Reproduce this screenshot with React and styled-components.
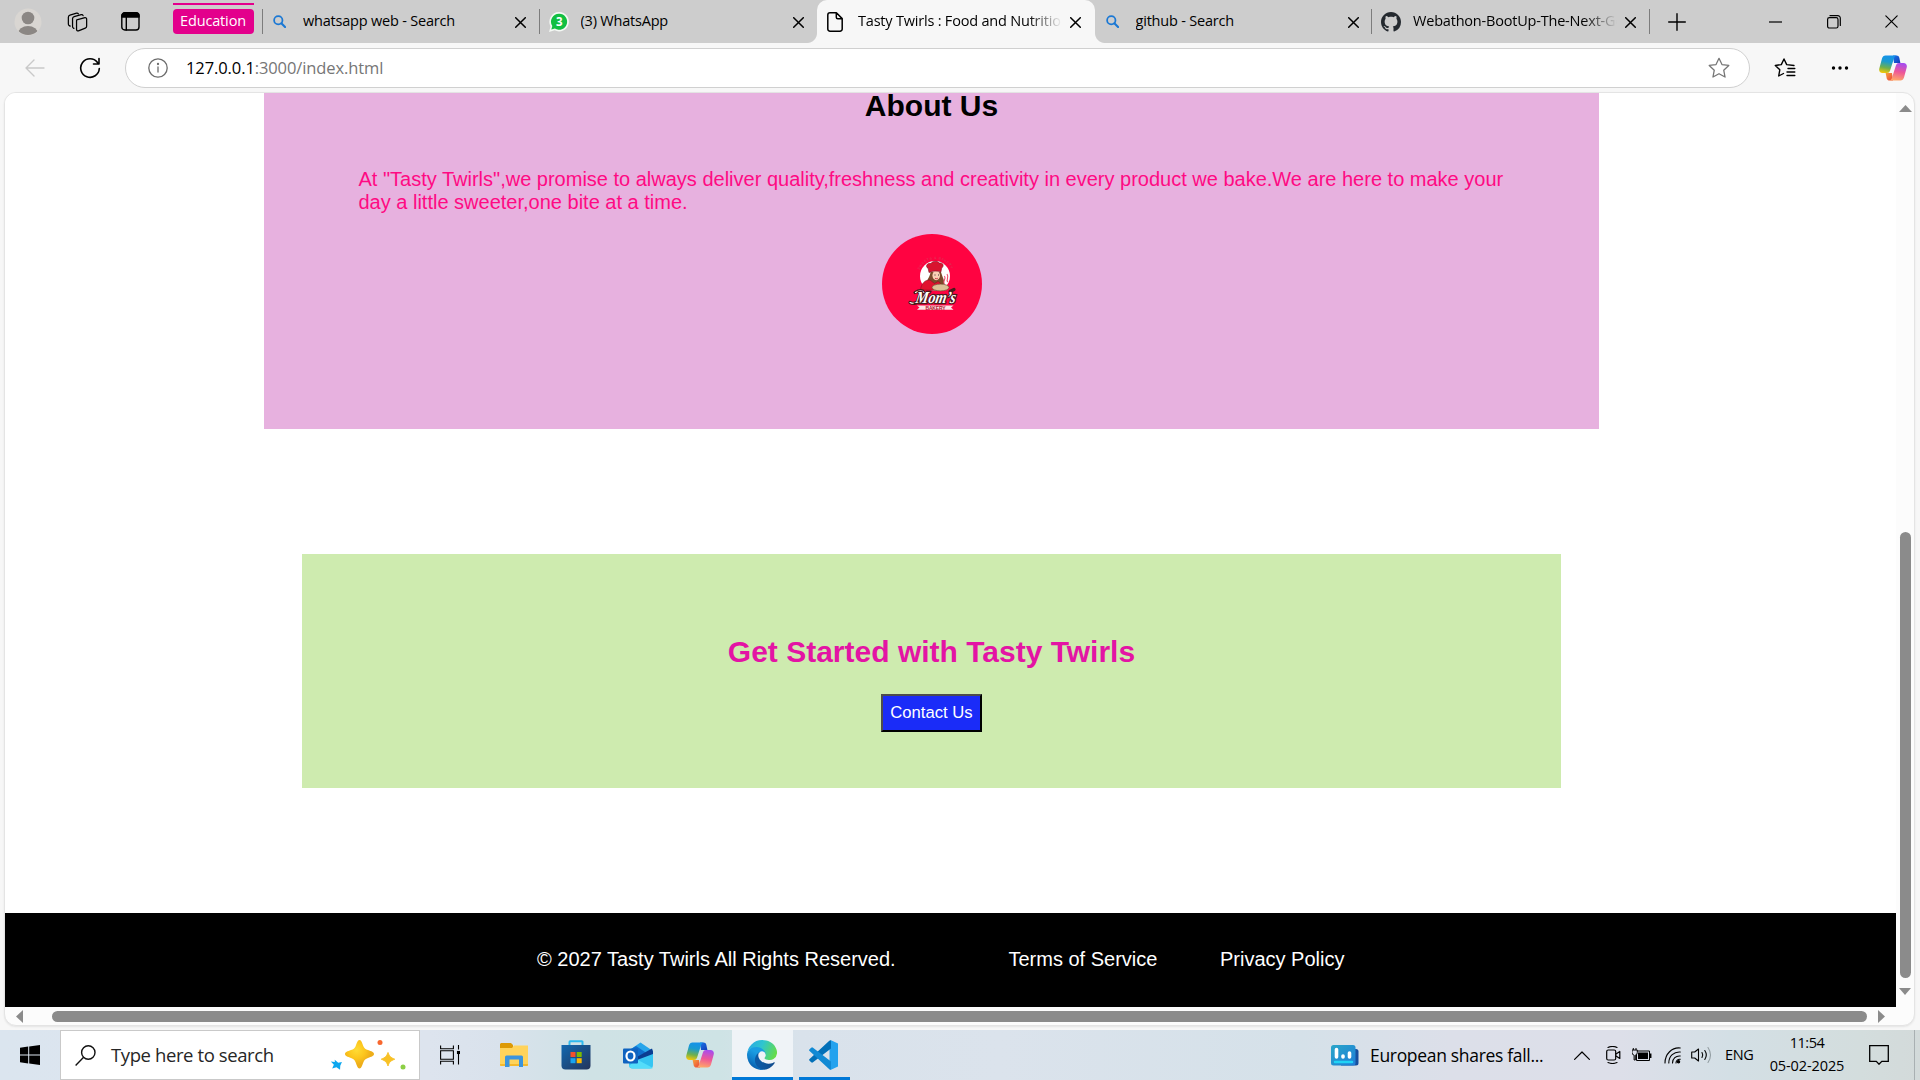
import React from "react";
import styled, { createGlobalStyle } from "styled-components";

const Global = createGlobalStyle`
  * { box-sizing: border-box; }
  body { margin: 0; background: #f7f7f7; overflow: hidden; }
  h2, p { margin: 0; font-weight: inherit; }
`;

const ui = `"Open Sans", "Noto Sans", sans-serif`;
const arial = `"Liberation Sans", Arial, sans-serif`;

const Screen = styled.div`
  width: 1920px;
  height: 1080px;
  display: flex;
  flex-direction: column;
  background: #f7f7f7;
  font-family: ${ui};
  color: #000;
  overflow: hidden;
`;

const Label = styled.span`
  font-size: ${(p) => p.$size}px;
  letter-spacing: ${(p) => p.$track || 0}px;
  color: ${(p) => p.$color || "#000"};
  white-space: nowrap;
  line-height: 1.3;
`;

/* ---------- tab strip ---------- */
const TabStrip = styled.header`
  height: 43px;
  flex: none;
  display: flex;
  background: #cdcdcd;
`;
const StripTools = styled.div`
  width: 173px;
  padding-left: 14px;
  display: flex;
  align-items: center;
`;
const ToolSlot = styled.div`
  width: ${(p) => p.$w}px;
  height: 100%;
  display: flex;
  align-items: center;
`;
const Group = styled.div`
  width: 81px;
  margin-right: 8px;
  padding-top: 3px;
`;
const GroupLine = styled.div`
  height: 2px;
  background: #e3008c;
`;
const GroupName = styled.div`
  margin-top: 4px;
  height: 25px;
  border-radius: 4px;
  background: #e3008c;
  display: flex;
  align-items: center;
  justify-content: center;
  padding: 0 1px 1px 0;
`;
const Tab = styled.div`
  position: relative;
  width: 277.5px;
  height: 43px;
  display: flex;
  align-items: center;
  padding: 0 11px 0 10px;
  border-radius: 10px 10px 0 0;
  background: ${(p) => (p.$active ? "#f7f7f7" : "transparent")};
  ${(p) =>
    p.$active &&
    `
    &::before, &::after {
      content: "";
      position: absolute;
      bottom: 0;
      width: 10px;
      height: 10px;
    }
    &::before { left: -10px; background: radial-gradient(circle at 0 0, #cdcdcd 9.5px, #f7f7f7 10.5px); }
    &::after { right: -10px; background: radial-gradient(circle at 100% 0, #cdcdcd 9.5px, #f7f7f7 10.5px); }
  `}
`;
const Divider = styled.i`
  width: 1px;
  height: 25px;
  margin: ${(p) => (p.$first ? "9px -1px 0 0" : "9px 0 0 -1px")};
  background: ${(p) => (p.$hide ? "transparent" : "#7c7c7c")};
`;
const TabIcon = styled.div`
  width: 31px;
  padding-left: ${(p) => p.$shift}px;
  display: flex;
  align-items: center;
`;
const TabTitle = styled.div`
  width: 204px;
  overflow: hidden;
  line-height: 1;
  ${(p) => p.$fade && `-webkit-mask-image: linear-gradient(90deg, #000 170px, transparent 204px);`}
`;
const TabClose = styled.div`
  margin-left: 8px;
  display: flex;
  padding-top: 1px;
`;
const WindowButtons = styled.div`
  flex: 1;
  display: flex;
  align-items: center;
  padding-left: 18px;
`;

/* ---------- toolbar ---------- */
const Toolbar = styled.div`
  height: 49px;
  flex: none;
  display: flex;
  align-items: center;
  padding: 1px 0 0 25px;
`;
const AddressBar = styled.div`
  width: 1625px;
  height: 40px;
  border: 1px solid #d0d0d0;
  border-radius: 20px;
  background: #fff;
  display: flex;
  align-items: center;
  padding: 0 19px 0 22px;
`;
const Url = styled.div`
  flex: 1;
  padding: 0 0 1px 18px;
`;

/* ---------- page ---------- */
const Viewport = styled.main`
  width: 1911px;
  height: 934px;
  margin-left: 4px;
  flex: none;
  display: grid;
  grid-template-columns: 1891px 18px;
  grid-template-rows: 914px 18px;
  border: 1px solid #e4e4e4;
  border-radius: 12px;
  background: #fcfcfc;
  overflow: hidden;
  box-shadow: 0 1px 2px rgba(0, 0, 0, 0.08);
`;
const Page = styled.div`
  background: #fff;
  overflow: hidden;
  display: flex;
  flex-direction: column;
  font-family: ${arial};
`;
const About = styled.section`
  width: 1335px;
  height: 340px;
  margin: -4px 0 0 259px;
  flex: none;
  background: #e7b1df;
  display: flex;
  flex-direction: column;
  align-items: center;
`;
const Heading = styled.h2`
  font-size: 30px;
  font-weight: 700;
  line-height: 34px;
  color: ${(p) => p.$color};
`;
const Promise = styled.p`
  width: 1146px;
  margin-top: 45px;
  font-size: 20px;
  line-height: 23px;
  color: #ff0a83;
`;
const Logo = styled.svg`
  margin-top: 20px;
`;
const Started = styled.section`
  width: 1259px;
  height: 234px;
  margin: 125px 0 0 297px;
  padding-top: 81px;
  flex: none;
  background: #ceebaf;
  display: flex;
  flex-direction: column;
  align-items: center;
`;
const Contact = styled.button`
  margin-top: 25px;
  width: 101px;
  height: 38px;
  padding: 0;
  border: 2px outset #000;
  border-color: #4d4d4d #000 #000 #4d4d4d;
  background: #1a2cf8;
  color: #fff;
  font: 16.67px ${arial};
`;
const Footer = styled.footer`
  height: 94px;
  margin-top: 125px;
  flex: none;
  background: #000;
  color: #fff;
  font-size: 20px;
  display: flex;
  align-items: center;
  padding: 0 0 2px 532px;
  white-space: nowrap;
`;
const FooterItem = styled.span`
  width: ${(p) => p.$w}px;
`;
const VBar = styled.div`
  display: flex;
  flex-direction: column;
  align-items: center;
  padding-top: 12px;
`;
const VThumb = styled.div`
  width: 11px;
  height: 446px;
  margin: 420px 0 10px;
  border-radius: 6px;
  background: #8b8b8b;
`;
const HBar = styled.div`
  display: flex;
  align-items: center;
  padding-left: 11px;
`;
const HThumb = styled.div`
  width: 1815px;
  height: 11px;
  margin: 0 11px 0 29px;
  border-radius: 6px;
  background: #8b8b8b;
`;

/* ---------- taskbar ---------- */
const Taskbar = styled.footer`
  height: 50px;
  margin-top: 4px;
  flex: none;
  display: flex;
  align-items: center;
  background: linear-gradient(90deg, #dbe5ef 0, #dde4ee 430px, #d9e2ec 500px, #cfe2e5 590px, #cee3e5 720px, #d9e2eb 800px, #dbe3ec 1000px, #d5e1e9 1300px, #dcdfe9 1450px, #dddfe9 1620px, #d3dfe5 1730px, #d3dddd 1860px, #d3dada 1920px);
`;
const SearchBox = styled.div`
  width: 360px;
  height: 50px;
  border: 1px solid #c9c9c9;
  background: #fff;
  display: flex;
  align-items: center;
  padding-left: 14px;
`;
const SearchText = styled.div`
  width: 234px;
  padding-left: 15px;
  line-height: 1;
`;
const Slot = styled.div`
  width: ${(p) => p.$w}px;
  height: 50px;
  flex: none;
  display: flex;
  align-items: center;
  justify-content: center;
  background: ${(p) => (p.$active ? "#eff3f7" : "transparent")};
  border-bottom: ${(p) => (p.$open ? "3px solid #0078d7" : "0")};
  padding: ${(p) => (p.$open ? "3px 1px 0 0" : 0)};
`;
const Tray = styled.div`
  margin-left: auto;
  display: flex;
  align-items: center;
`;
const Cell = styled.div`
  width: ${(p) => p.$w}px;
  flex: none;
  display: flex;
  align-items: center;
`;
const Clock = styled.div`
  width: 76px;
  display: flex;
  flex-direction: column;
  align-items: center;
  gap: 4px;
`;
const Edge = styled.i`
  width: 1px;
  height: 50px;
  margin-right: 5px;
  background: #a9b0b2;
`;

/* ---------- icons ---------- */
const line = { fill: "none", stroke: "#000", strokeWidth: 1.4, strokeLinecap: "round", strokeLinejoin: "round" };

const CloseIcon = ({ s = 11, w = 1.5 }) => (
  <svg width={s} height={s} viewBox="0 0 11 11" {...line} strokeWidth={w}>
    <path d="M.7.7l9.6 9.6M10.3.7L.7 10.3" />
  </svg>
);
const BingIcon = () => (
  <svg width="13" height="13" viewBox="0 0 14 14" fill="none" stroke="#1b78d4" strokeWidth="1.9">
    <circle cx="5.7" cy="5.7" r="4.5" />
    <path d="M9 9l4 4" strokeWidth="2.3" strokeLinecap="round" />
  </svg>
);
const WhatsIcon = () => (
  <svg width="20" height="20" viewBox="0 0 20 20">
    <path d="M10.3 0a9.7 9.7 0 1 1-4.6 18.3L0 20l1.6-5.6A9.7 9.7 0 0 1 10.3 0z" fill="#f4f8f4" />
    <path d="M10.3 1.7a8 8 0 1 1-4.4 14.8l-3.6 1 1-3.5a8 8 0 0 1 7-12.3z" fill="#12bf42" />
    <text x="10.2" y="14" fontSize="11.5" fontWeight="700" textAnchor="middle" fill="#fff" fontFamily="Open Sans">3</text>
  </svg>
);
const FileIcon = () => (
  <svg width="16" height="20" viewBox="0 0 16 20" {...line} strokeWidth="1.5">
    <path d="M3 .8h6.4L15.2 6.6V17a2.2 2.2 0 0 1-2.2 2.2H3A2.2 2.2 0 0 1 .8 17V3A2.2 2.2 0 0 1 3 .8zM9.3 1v4.2c0 .9.6 1.5 1.5 1.5H15" />
  </svg>
);
const GithubIcon = () => (
  <svg width="20" height="20" viewBox="0 0 16 16" fill="#24292f">
    <path d="M8 0C3.58 0 0 3.58 0 8c0 3.54 2.29 6.53 5.47 7.59.4.07.55-.17.55-.38 0-.19-.01-.82-.01-1.49-2.01.37-2.53-.49-2.69-.94-.09-.23-.48-.94-.82-1.13-.28-.15-.68-.52-.01-.53.63-.01 1.08.58 1.23.82.72 1.21 1.87.87 2.33.66.07-.52.28-.87.51-1.07-1.78-.2-3.64-.89-3.64-3.95 0-.87.31-1.59.82-2.15-.08-.2-.36-1.02.08-2.12 0 0 .67-.21 2.2.82.64-.18 1.32-.27 2-.27s1.36.09 2 .27c1.53-1.04 2.2-.82 2.2-.82.44 1.1.16 1.92.08 2.12.51.56.82 1.27.82 2.15 0 3.07-1.87 3.75-3.65 3.95.29.25.54.73.54 1.48 0 1.07-.01 1.93-.01 2.2 0 .21.15.46.55.38A8.01 8.01 0 0 0 16 8c0-4.42-3.58-8-8-8z" />
  </svg>
);
const Avatar = () => (
  <svg width="28" height="28" viewBox="0 0 28 28">
    <defs><clipPath id="av"><circle cx="14" cy="14" r="13" /></clipPath></defs>
    <circle cx="14" cy="14" r="13.5" fill="#d9d6d2" />
    <g clipPath="url(#av)" fill="#8b8784"><circle cx="14" cy="10" r="6.3" /><ellipse cx="14" cy="25.5" rx="10" ry="7.5" /></g>
  </svg>
);
const WorkspacesIcon = () => (
  <svg width="21" height="20" viewBox="0 0 22 21" {...line} strokeWidth="1.3">
    <path d="M10.2 8.200l8.600-2.300a1.500 1.500 0 0 1 1.800 1.500v7.600a2 2 0 0 1-1.400 1.900L12 19.800a1.500 1.500 0 0 1-2-1.400V9z" />
    <path d="M7.200 17.200l-.500-.300a2 2 0 0 1-.9-1.700V7A2.500 2.500 0 0 1 7.500 4.800l7.400-2a1.700 1.700 0 0 1 2 1M3.300 14.800l-.9-.500A2 2 0 0 1 1.400 12.500V5.500A2.500 2.500 0 0 1 3.100 3.200L10 1.200a1.700 1.700 0 0 1 1.900.7" />
  </svg>
);
const TabActionsIcon = () => (
  <svg width="19" height="19" viewBox="0 0 19 19" {...line}>
    <rect x=".8" y=".8" width="17.2" height="17.2" rx="3" />
    <path d="M1 5V3.500A2.500 2.500 0 0 1 3.500 1h12A2.500 2.500 0 0 1 18 3.500V5z" fill="#000" />
    <path d="M5.300 5v13" />
  </svg>
);
const star = "M10 1.200l2.700 5.700 6.200.8-4.600 4.300 1.200 6.200L10 15.200l-5.500 3 1.200-6.200L1.100 7.700l6.200-.8z";
const CopilotIcon = ({ id, w = 28 }) => (
  <svg width={w} height={w * 0.93} viewBox="0 0 28 26">
    <defs>
      <linearGradient id={id + "a"} x1=".5" y1="0" x2=".3" y2="1"><stop offset="0" stopColor="#1592ea" /><stop offset=".35" stopColor="#1a9bd0" /><stop offset=".7" stopColor="#6fb04d" /><stop offset="1" stopColor="#f4c808" /></linearGradient>
      <linearGradient id={id + "b"} x1=".6" y1="0" x2=".4" y2="1"><stop offset="0" stopColor="#a64cf0" /><stop offset=".5" stopColor="#ee5798" /><stop offset="1" stopColor="#ffa868" /></linearGradient>
      <linearGradient id={id + "c"} x1="0" y1="0" x2="1" y2="1"><stop offset="0" stopColor="#1a74e8" /><stop offset="1" stopColor="#123cb8" /></linearGradient>
      <linearGradient id={id + "d"} x1="0" y1="0" x2="1" y2="1"><stop offset="0" stopColor="#f9a13a" /><stop offset="1" stopColor="#e8423c" /></linearGradient>
    </defs>
    <path d="M14 .5h3.500c1.500 0 2.400.9 2.800 2.300L21.400 8H15z" fill={`url(#${id}c)`} />
    <path d="M14 25.500h-3.500c-1.500 0-2.400-.9-2.800-2.300L6.600 18H13z" fill={`url(#${id}d)`} />
    <path d="M6.500.5H18c-1.600 0-2.400 1-2.900 2.500l-4 12.500c-.6 1.700-1.500 2.500-3.200 2.500H3.500C.8 18-.3 16 .3 13.500L3 3.500C3.600 1.500 4.700.5 6.500.5z" fill={`url(#${id}a)`} />
    <path d="M21.500 25.500H10c1.600 0 2.400-1 2.900-2.500l4-12.500C17.500 8.800 18.400 8 20.100 8h4.400c2.700 0 3.800 2 3.200 4.500L25 22.500c-.6 2-1.700 3-3.500 3z" fill={`url(#${id}b)`} />
  </svg>
);
const Triangle = ({ w, h, d }) => (
  <svg width={w} height={h} viewBox={`0 0 ${w} ${h}`}><path d={d} fill="#8b8b8b" /></svg>
);
const BakeryLogo = () => (
  <Logo width="100" height="100" viewBox="0 0 100 100">
    <defs><path id="arc" d="M37.500 36a17.500 17.500 0 0 1 32.500 0" /></defs>
    <circle cx="50" cy="50" r="50" fill="#ff0341" />
    <text fontSize="3.400" fill="#d9405c" fontFamily="Liberation Sans"><textPath href="#arc" textLength="40">SWEETS &amp; BAKERY</textPath></text>
    <circle cx="53" cy="42" r="15" fill="#fff" />
    <path d="M48.500 38c-.5 5-3.500 7-4 12l6 1 8-1 3 1c2-4-1-7-2.500-13z" fill="#7a4a2a" />
    <ellipse cx="54.200" cy="41.500" rx="3.800" ry="4.700" fill="#fbd0b4" />
    <path d="M47 38.500l-.8-4c-3.500-2-.8-6 2.600-5 2-2.800 7-3 8.500-.4 3.500-1 5.300 2.600 2.400 5l-.8 3.900c-4-1.500-8-1.200-11.900.5z" fill="#d8142f" stroke="#7b1020" strokeWidth=".6" />
    <path d="M38.500 56c.5-6 4.500-10.500 9.500-10l4.500 3.500 3.500-2c3 1 4 4 4 9z" fill="#e0122f" stroke="#8b1020" strokeWidth=".6" />
    <path d="M52.500 41h1M56 41h1" stroke="#222" strokeWidth=".9" />
    <path d="M53 44.300q1.500.8 2.800 0" stroke="#c1122c" strokeWidth=".8" fill="none" />
    <path d="M62.500 50c-3-3 2.500-4 0-8M66 48c-3-3 2-3.500-1-8" stroke="#f04a68" strokeWidth="1.100" fill="none" />
    <ellipse cx="58.500" cy="53.500" rx="8.500" ry="3.400" fill="#dcc096" stroke="#765033" strokeWidth=".7" />
    <path d="M28 68.500c4 2 8 0 9.500-3M33 58.500c5-3 8-2 9 0M68 57.500l4-2" stroke="#4a1a1c" strokeWidth="3.200" fill="none" strokeLinecap="round" />
    <path d="M28 68.500c4 2 8 0 9.500-3M33.500 58.500c5-3 7-2 8.500 0" stroke="#fff" strokeWidth="1.100" fill="none" strokeLinecap="round" />
    <text transform="translate(33 69.300) skewX(-10)" fontFamily="Liberation Serif, serif" fontSize="17" fontStyle="italic" fontWeight="700" textLength="40" lengthAdjust="spacingAndGlyphs" fill="#fff" stroke="#4a1a1c" strokeWidth="2.400" paintOrder="stroke">Mom’s</text>
    <path d="M35 71.500h36.500l-2.500 2 2.500 2.300H35l2.500-2.300z" fill="#fbe4e6" />
    <text x="43.500" y="75.600" fontFamily="Liberation Sans" fontSize="5" fontWeight="700" textLength="20" fill="#b3122c">BAKERY</text>
  </Logo>
);
const Sparkles = () => (
  <svg width="76" height="32" viewBox="0 0 76 32">
    <defs>
      <radialGradient id="sp" cx=".4" cy=".35"><stop offset="0" stopColor="#ffdc35" /><stop offset=".6" stopColor="#fcc51d" /><stop offset="1" stopColor="#eeae1a" /></radialGradient>
    </defs>
    <path d="M29.500 1c2 0 2.600 3 4 6.500 1 2.200 2 2.600 4.500 3.600C41.500 12.500 44 13 44 15s-2.500 2.600-6 4c-2.500 1-3.500 1.500-4.500 4-1.400 3.500-2 6.500-4 6.500s-2.600-3-4-6.500c-1-2.500-2-3-4.500-4-3.500-1.400-6-2-6-4s2.500-2.500 6-3.900c2.500-1 3.500-1.400 4.500-3.600 1.400-3.500 2-6.500 4-6.500z" fill="url(#sp)" />
    <path d="M58 13.500c1.400 3.800 2.300 5 6.700 6.700-4.400 1.700-5.300 2.900-6.700 6.700-1.400-3.800-2.300-5-6.700-6.700 4.400-1.700 5.300-2.900 6.700-6.700z" fill="#f8c125" stroke="#f8c125" strokeLinejoin="round" />
    <path d="M4 21l4 2.500 3.500-1.500-1 4 .5 4-4-2-4 2 1-4-3.500-2.500 4-.2z" transform="rotate(10 6 25)" fill="#0ca7ef" />
    <circle cx="50" cy="3.500" r="2.500" fill="#f8672e" />
    <circle cx="73" cy="28" r="2.500" fill="#8ccf45" />
  </svg>
);
const EdgeIcon = () => (
  <svg width="30" height="30" viewBox="0 0 256 256">
    <defs>
      <linearGradient id="e1" x1=".25" y1=".8" x2="1" y2=".8"><stop offset="0" stopColor="#0c59a4" /><stop offset="1" stopColor="#114a8b" /></linearGradient>
      <linearGradient id="e2" x1=".6" y1=".35" x2=".3" y2=".95"><stop offset="0" stopColor="#1b9de2" /><stop offset=".5" stopColor="#1080cc" /><stop offset="1" stopColor="#0659a8" /></linearGradient>
      <linearGradient id="e3" x1="0" y1=".3" x2="1" y2=".6"><stop offset="0" stopColor="#2aa9e4" /><stop offset=".45" stopColor="#2fc5cf" /><stop offset="1" stopColor="#66dd45" /></linearGradient>
    </defs>
    <path d="M231 190.500a93.700 93.700 0 0 1-10.500 4.700 101.900 101.900 0 0 1-35.900 6.500c-47.300 0-88.500-32.500-88.500-74.300a31.500 31.500 0 0 1 16.400-27.300c-42.800 1.800-53.800 46.400-53.800 72.500 0 73.900 68.100 81.400 82.800 81.400 7.900 0 19.800-2.300 27-4.600l1.300-.4a128.300 128.300 0 0 0 66.600-52.800 4 4 0 0 0-5.400-5.700z" fill="url(#e1)" />
    <path d="M105.700 241.400a79.200 79.200 0 0 1-22.700-21.300 80.700 80.700 0 0 1 29.500-120c3.200-1.500 8.500-4.100 15.600-4a32.400 32.400 0 0 1 25.700 13 31.900 31.900 0 0 1 6.300 18.700c0-.2 24.500-79.600-80-79.600-43.900 0-80 41.700-80 78.200a130.200 130.200 0 0 0 12.100 56 128 128 0 0 0 156.400 67 75.500 75.500 0 0 1-62.800-8z" fill="url(#e2)" />
    <path d="M152.300 148.900c-.8 1-3.300 2.500-3.300 5.700 0 2.600 1.700 5.200 4.800 7.300 14.400 10.100 41.700 8.700 41.800 8.700a59.600 59.600 0 0 0 30.300-8.300 61.400 61.400 0 0 0 30.400-52.900c.3-22.400-8-37.300-11.300-43.900C223.700 24 178.100 1 128 1A128 128 0 0 0 0 126.200c.5-36.500 36.800-66 80-66 3.500 0 23.500.3 42 10.100a72.600 72.600 0 0 1 30.900 29.300c6.100 10.600 7.200 24.100 7.200 29.500s-2.700 13.300-7.800 19.800z" fill="url(#e3)" />
  </svg>
);

const tabs = [
  { icon: <BingIcon />, shift: 1, title: "whatsapp web - Search", line: true },
  { icon: <WhatsIcon />, shift: -1, title: "(3) WhatsApp", line: false },
  { icon: <FileIcon />, shift: 0, title: "Tasty Twirls : Food and Nutrition", active: true, fade: true },
  { icon: <BingIcon />, shift: 1, title: "github - Search", line: true },
  { icon: <GithubIcon />, shift: -1, title: "Webathon-BootUp-The-Next-Gen", line: true, fade: true },
];

const IconNudge = styled.div`
  display: flex;
  margin-left: ${(p) => p.$x}px;
`;

export default function App() {
  return (
    <Screen>
      <Global />
      <TabStrip>
        <StripTools>
          <ToolSlot $w={53}><Avatar /></ToolSlot>
          <ToolSlot $w={54}><WorkspacesIcon /></ToolSlot>
          <ToolSlot $w={30}><TabActionsIcon /></ToolSlot>
        </StripTools>
        <Group>
          <GroupLine />
          <GroupName><Label $size={14.5} $track={-0.15} $color="#fff">Education</Label></GroupName>
        </Group>
        <Divider $first />
        {tabs.map((t) => (
          <React.Fragment key={t.title}>
            <Tab $active={t.active}>
              <TabIcon $shift={0}><IconNudge $x={t.shift}>{t.icon}</IconNudge></TabIcon>
              <TabTitle $fade={t.fade}><Label $size={14.5} $track={-0.2}>{t.title}</Label></TabTitle>
              <TabClose><CloseIcon /></TabClose>
            </Tab>
            <Divider $hide={!t.line} />
          </React.Fragment>
        ))}
        <WindowButtons>
          <ToolSlot $w={101}>
            <svg width="18" height="18" viewBox="0 0 18 18" {...line}><path d="M9 .7v16.600M.7 9h16.600" /></svg>
          </ToolSlot>
          <ToolSlot $w={58}>
            <svg width="13" height="2" viewBox="0 0 13 2"><path d="M0 1h13" stroke="#000" strokeWidth="1.200" /></svg>
          </ToolSlot>
          <ToolSlot $w={58}>
            <svg width="14" height="14" viewBox="0 0 14 14" {...line} strokeWidth="1.200">
              <rect x=".6" y="2.600" width="10.400" height="10.400" rx="1.800" />
              <path d="M3 .7h7.800A2.500 2.500 0 0 1 13.300 3.200V10.500" />
            </svg>
          </ToolSlot>
          <CloseIcon s={13} w={1} />
        </WindowButtons>
      </TabStrip>

      <Toolbar>
        <ToolSlot $w={54}>
          <svg width="20" height="18" viewBox="0 0 20 18" {...line} stroke="#c9c9c9"><path d="M19 9H1M9 1L1 9l8 8" /></svg>
        </ToolSlot>
        <ToolSlot $w={46}>
          <svg width="22" height="22" viewBox="0 0 22 22" {...line} strokeWidth="1.600">
            <path d="M20.300 11.500A9.300 9.300 0 1 1 18.500 5.500L19.800 7M20 1.500V7h-5.500" />
          </svg>
        </ToolSlot>
        <AddressBar>
          <svg width="20" height="20" viewBox="0 0 20 20" {...line} stroke="#6c6c6c" strokeWidth="1.300">
            <circle cx="10" cy="10" r="9.200" /><path d="M10 9v5" /><circle cx="10" cy="6" r=".5" fill="#6c6c6c" />
          </svg>
          <Url>
            <Label $size={16.5} $track={-0.1}>127.0.0.1</Label>
            <Label $size={16.5} $track={-0.1} $color="#767676">:3000/index.html</Label>
          </Url>
          <svg width="22" height="22" viewBox="0 0 20 20" {...line} stroke="#757575" strokeWidth="1.150"><path d={star} /></svg>
        </AddressBar>
        <ToolSlot $w={81}>
          <svg width="46" height="22" viewBox="-24 0 46 22" {...line}>
            <path d="M9.500 17.500L4.700 20l1.100-6.200L1.300 9.500l6-.9L10 3l2.700 5.600 7.300.9M14 12.500h6.800M13 16h7.800M13 19.500h7.800" transform="translate(0 -1)" />
          </svg>
        </ToolSlot>
        <ToolSlot $w={48}>
          <svg width="18" height="4" viewBox="0 0 18 4"><circle cx="2.500" cy="2" r="1.700" /><circle cx="9" cy="2" r="1.700" /><circle cx="15.500" cy="2" r="1.700" /></svg>
        </ToolSlot>
        <CopilotIcon id="top" />
      </Toolbar>

      <Viewport>
        <Page>
          <About>
            <Heading $color="#000">About Us</Heading>
            <Promise>
              At "Tasty Twirls",we promise to always deliver quality,freshness and creativity in every product we bake.We are here to make your day a little sweeter,one bite at a time.
            </Promise>
            <BakeryLogo />
          </About>
          <Started>
            <Heading $color="#e314a4">Get Started with Tasty Twirls</Heading>
            <Contact>Contact Us</Contact>
          </Started>
          <Footer>
            <FooterItem $w={471.5}>© 2027 Tasty Twirls All Rights Reserved.</FooterItem>
            <FooterItem $w={211.5}>Terms of Service</FooterItem>
            <FooterItem $w={130}>Privacy Policy</FooterItem>
          </Footer>
        </Page>
        <VBar>
          <Triangle w={13} h={7} d="M6.500 0L13 7H0z" />
          <VThumb />
          <Triangle w={12} h={7} d="M0 0h12L6 7z" />
        </VBar>
        <HBar>
          <Triangle w={7} h={13} d="M7 0v13L0 6.500z" />
          <HThumb />
          <Triangle w={7} h={13} d="M0 0v13l7-6.500z" />
        </HBar>
      </Viewport>

      <Taskbar>
        <Slot $w={60}>
          <svg width="20" height="20" viewBox="0 0 20 20"><path d="M0 2.800L8.200 1.600V9.500H0zM9.200 1.500L20 0v9.500H9.200zM0 10.400h8.200v8L0 17.200zM9.200 10.400H20V20L9.200 18.500z" /></svg>
        </Slot>
        <SearchBox>
          <svg width="21" height="21" viewBox="0 0 21 21" fill="none" stroke="#111" strokeWidth="1.400"><circle cx="13.300" cy="7.500" r="6.700" /><path d="M8.600 12.300L.6 20.400" /></svg>
          <SearchText><Label $size={18.5} $track={-0.4} $color="#262626">Type here to search</Label></SearchText>
          <Sparkles />
        </SearchBox>
        <Slot $w={60}>
          <svg width="20" height="20" viewBox="0 0 20 20" fill="none" stroke="#000" strokeWidth="1.100">
            <path d="M.6.5v3.200h12.800V.5M.6 19.500v-3.200h12.800v3.200M.6 5.800h12.800v8.500H.6zM18.500 0v4.500M18.500 9v10.500" /><rect x="17.500" y="6.500" width="2" height="2" fill="#000" />
          </svg>
        </Slot>
        <Slot $w={67}>
          <svg width="28" height="24" viewBox="0 0 28 24">
            <path d="M1 0h10l2 2v4H0V1z" fill="#dd9a06" /><path d="M0 5h12l2-2.500h14V22a1 1 0 0 1-1 1H1a1 1 0 0 1-1-1z" fill="#ffd35b" /><path d="M0 21h28v1a1 1 0 0 1-1 1H1a1 1 0 0 1-1-1z" fill="#f5b92c" />
            <path d="M5 24V14a1.500 1.500 0 0 1 1.500-1.500h15A1.500 1.500 0 0 1 23 14v10h-4v-7.500H9.500V24z" fill="#3b94dd" />
          </svg>
        </Slot>
        <Slot $w={57}>
          <svg width="30" height="30" viewBox="0 0 30 30">
            <defs><linearGradient id="st" x1="0" y1="0" x2="1" y2="1"><stop offset="0" stopColor="#1268b0" /><stop offset="1" stopColor="#24345a" /></linearGradient></defs>
            <path d="M8.500 7V2a.7.700 0 0 1 .7-.7h11.600a.7.700 0 0 1 .7.7v5" fill="none" stroke="#2fb9ee" strokeWidth="2" />
            <path d="M.5 5h29v20.500a4 4 0 0 1-4 4h-21a4 4 0 0 1-4-4z" fill="url(#st)" />
            <path d="M9.500 12h5v5h-5z" fill="#f2502c" /><path d="M15.700 12h5v5h-5z" fill="#7fba00" /><path d="M9.500 18.200h5v5h-5z" fill="#19a4ef" /><path d="M15.700 18.200h5v5h-5z" fill="#ffb900" />
          </svg>
        </Slot>
        <Slot $w={68}>
          <svg width="31" height="27" viewBox="0 0 31 27">
            <path d="M5 9L17.500.5 30 9v6H5z" fill="#27a5ea" /><path d="M5 9l8-5 12 8-10 6-10-3z" fill="#0f6fce" /><path d="M12 16L29 6.500l1 3V13l-12 7z" fill="#0c3d91" />
            <path d="M6 18h8L30 12v11a3.500 3.500 0 0 1-3.500 3.500h-17A3.500 3.500 0 0 1 6 23z" fill="#36c5f2" /><path d="M14 17.500L30 26c-.8.400-1.500.500-3.500.500h-17C8 26.500 6.500 25.500 6 24z" fill="#54ddfa" />
            <rect x="0" y="6.500" width="15" height="15" rx="1" fill="#0f63c0" /><ellipse cx="7.500" cy="14" rx="4" ry="4.500" fill="none" stroke="#fff" strokeWidth="2.200" />
          </svg>
        </Slot>
        <Slot $w={56}><CopilotIcon id="task" /></Slot>
        <Slot $w={4} />
        <Slot $w={61} $active $open><EdgeIcon /></Slot>
        <Slot $w={6} />
        <Slot $w={51} $open>
          <svg width="30" height="30" viewBox="0 0 30 30">
            <path d="M22 .3L29 3.500v23L22 29.700 20.500 28V2z" fill="#24a2ee" />
            <path d="M22 .3v8.300L4 22.300a1.400 1.400 0 0 1-1.800 0L.6 20.800a1.300 1.300 0 0 1 0-1.900L20.300.8c.5-.4 1-.6 1.700-.5z" fill="#0270b8" />
            <path d="M22 29.700v-8.300L4 7.700a1.400 1.400 0 0 0-1.800 0L.6 9.200a1.300 1.300 0 0 0 0 1.900l19.700 18.100c.5.400 1 .6 1.700.5z" fill="#118ad4" />
          </svg>
        </Slot>
        <Tray>
          <Cell $w={39}>
            <svg width="28" height="21" viewBox="0 0 28 21">
              <defs><linearGradient id="nw" x1="0" y1="0" x2="1" y2="1"><stop offset="0" stopColor="#2aa6c9" /><stop offset="1" stopColor="#1e7ed8" /></linearGradient></defs>
              <path d="M10 4h15a2.500 2.500 0 0 1 2.500 2.500V18a2.500 2.500 0 0 1-2.500 2.500H10z" fill="#164f9f" /><rect width="24.500" height="20.500" rx="2.500" fill="url(#nw)" />
              <path d="M5.500 4.500v7.500M12 11v1M18.500 8v4" stroke="#fff" strokeWidth="3.600" strokeLinecap="round" /><path d="M4 17h17" stroke="#20d3f5" strokeWidth="2.500" strokeLinecap="round" />
            </svg>
          </Cell>
          <Cell $w={204}><Label $size={17.5} $track={-0.32}>European shares fall...</Label></Cell>
          <Cell $w={32}><svg width="16" height="9" viewBox="0 0 16 9" {...line} strokeWidth="1.200"><path d="M.6 8.400L8 1l7.400 7.400" /></svg></Cell>
          <Cell $w={26}>
            <svg width="15" height="18" viewBox="0 0 15 18" {...line} strokeWidth="1.200"><rect x=".7" y="4" width="9" height="10" rx="1.500" /><path d="M10 8l3.800-2.500v7L10 10M2 1.500Q6.500-.5 11 1.500M2 16.500Q6.500 18.500 11 16.500" /></svg>
          </Cell>
          <Cell $w={32}>
            <svg width="20" height="14" viewBox="0 0 20 14">
              <path d="M4.500 3h13v9.500h-13z" fill="none" stroke="#000" /><path d="M6 4.500h10V11H6z" /><path d="M18.700 5.500v4.500" stroke="#000" strokeWidth="1.500" />
              <path d="M1.300 0v2M4 0v2M0 2h5.300v2.500a2.700 2.700 0 0 1-2 2.700V12H2.100V7.200A2.700 2.700 0 0 1 0 4.500z" fill="#dcdfe9" stroke="#000" strokeWidth="1" />
            </svg>
          </Cell>
          <Cell $w={27}>
            <svg width="17" height="18" viewBox="0 0 17 18" {...line} strokeWidth="1.100"><path d="M1 17C1 8 8 1 16.300 2M4.800 17C4.800 10 10 5.500 16.300 6M8.500 17c0-4.500 3.500-7.500 7.800-7M12 17c0-2.500 1.900-4 4.300-3.700" /><circle cx="14.500" cy="15.800" r="1.200" fill="#000" /></svg>
          </Cell>
          <Cell $w={34}>
            <svg width="21" height="18" viewBox="0 0 21 18" {...line} strokeWidth="1.100"><path d="M.7 6h3L7.500 3v12l-3.800-3h-3zM11 6.500q1.500 2.500 0 5M13.800 4.500q3 4.500 0 9" /><path d="M17 1.500q5 7.500 0 15" stroke="#929da2" /></svg>
          </Cell>
          <Cell $w={44}><Label $size={14.5} $track={-0.3}>ENG</Label></Cell>
          <Clock><Label $size={14.5} $track={-0.45}>11:54</Label><Label $size={14.5} $track={-0.1}>05-02-2025</Label></Clock>
          <Cell $w={24} />
          <Cell $w={45}>
            <svg width="20" height="20" viewBox="0 0 20 20" fill="none" stroke="#000" strokeWidth="1.300"><path d="M.7.700h18.600v15.600h-6.500L10 19.200 7.300 16.300H.7z" /></svg>
          </Cell>
          <Edge />
        </Tray>
      </Taskbar>
    </Screen>
  );
}
